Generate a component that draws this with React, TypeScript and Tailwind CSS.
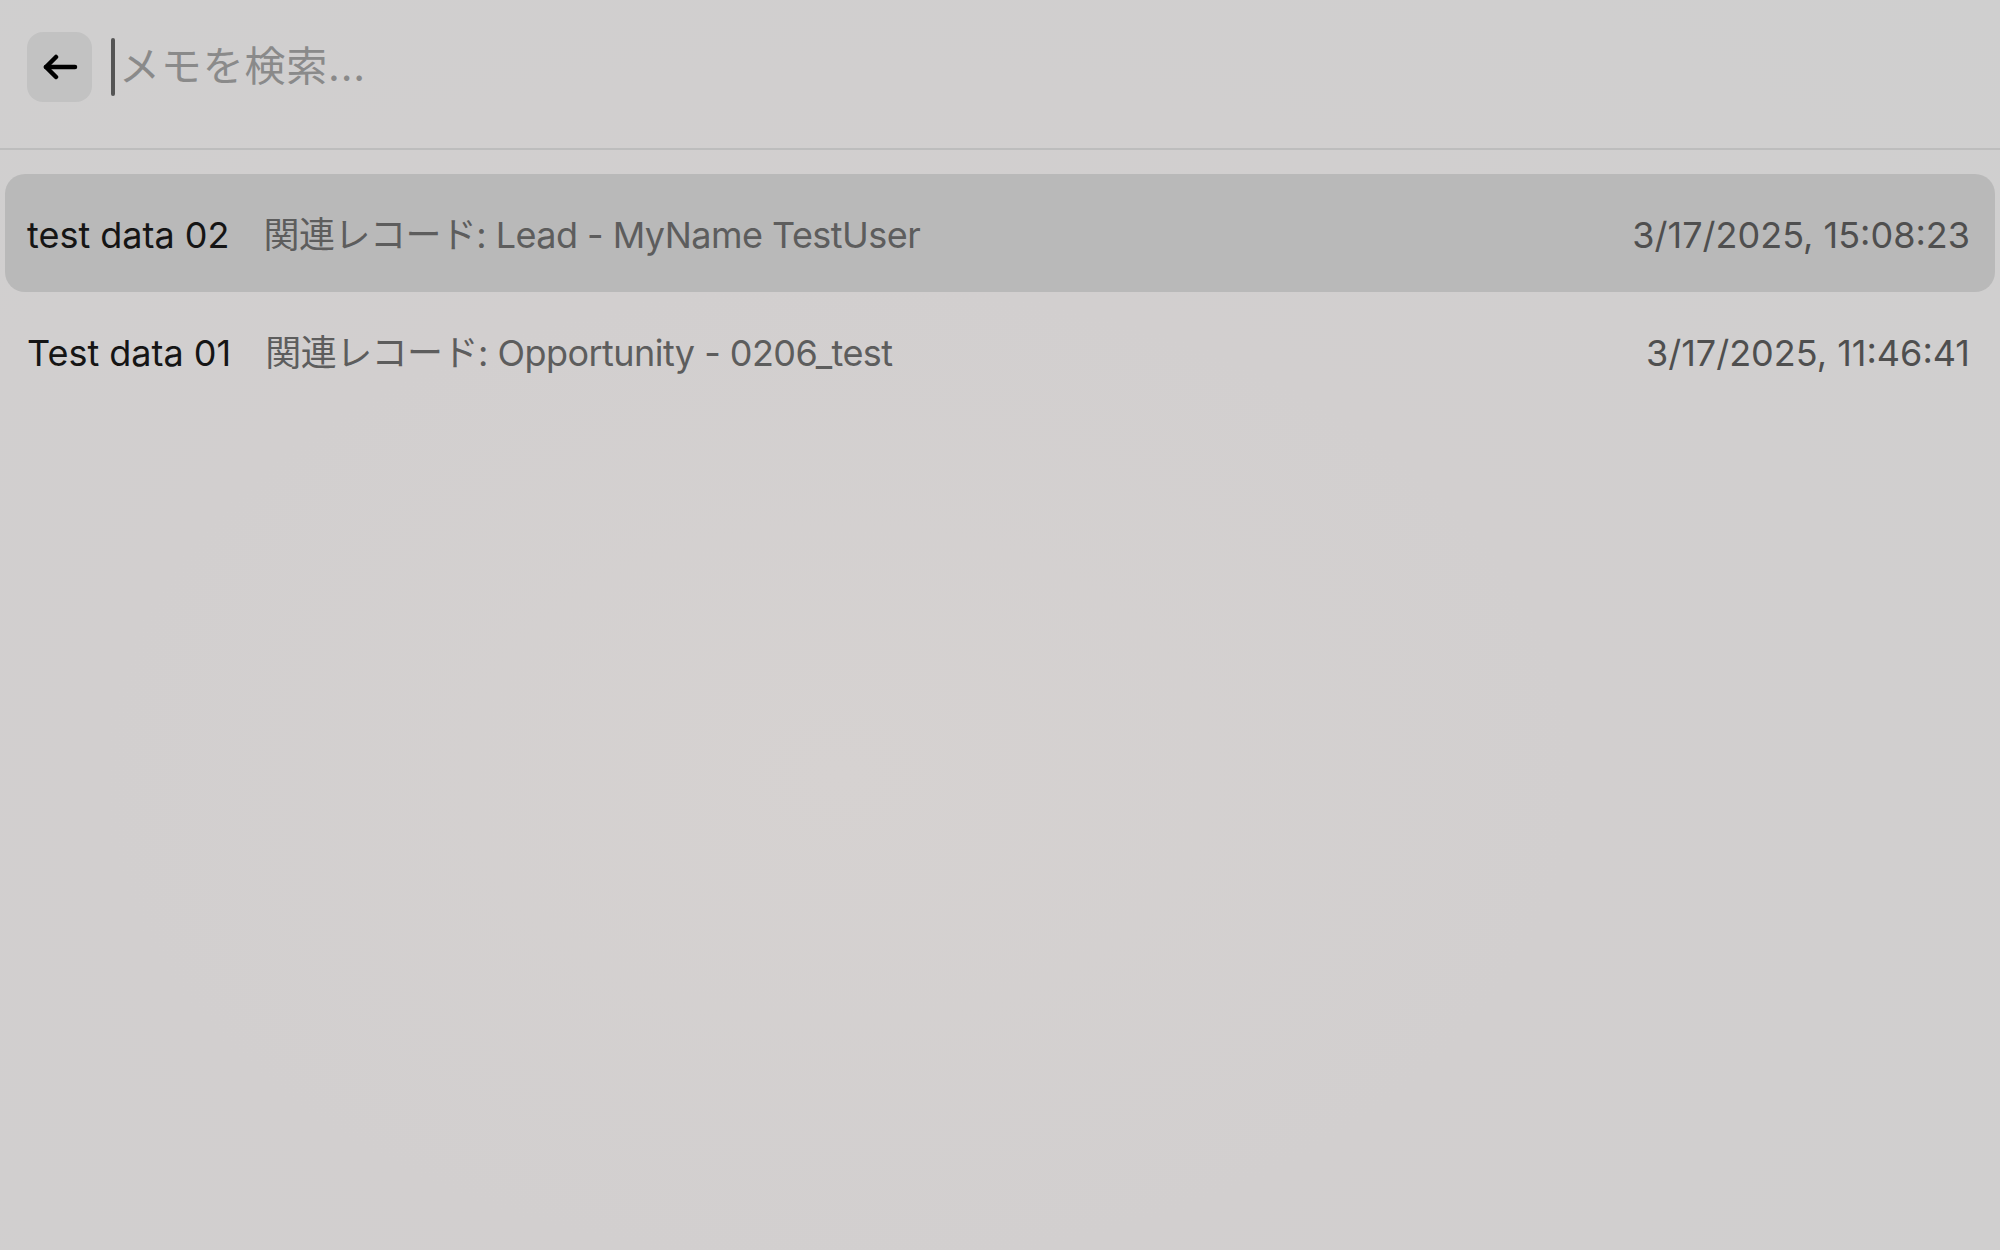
import React from 'react';

type Memo = {
  title: string;
  related: string;
  date: string;
  active?: boolean;
};

const memos: Memo[] = [
  { title: 'test data 02', related: '関連レコード: Lead - MyName TestUser', date: '3/17/2025, 15:08:23', active: true },
  { title: 'Test data 01', related: '関連レコード: Opportunity - 0206_test', date: '3/17/2025, 11:46:41' },
];

const font = { fontFamily: 'Inter, "Noto Sans CJK JP", sans-serif' };

const BackArrow: React.FC = () => (
  <svg width="36" height="26" viewBox="0 0 36 26" fill="none" stroke="black" strokeWidth="4.5" strokeLinecap="round" strokeLinejoin="round">
    <path d="M33 13H4" />
    <path d="M14 3L4 13l10 10" />
  </svg>
);

const App: React.FC = () => {
  return (
    <div
      className="min-h-screen w-full bg-[#cfcfcf] bg-[radial-gradient(ellipse_at_42%_62%,#d6d2d1_0%,#d2cfcf_45%,#cfcfcf_100%)]"
      style={font}
    >
      <header className="h-[150px] px-[27px] pt-[32px] flex items-start gap-[19px] border-b-2 border-[#bdbdbd]">
        <button className="w-[65px] h-[70px] rounded-[16px] bg-[#c2c2c2] flex items-center justify-center shrink-0">
          <BackArrow />
        </button>
        <div className="h-[70px] flex items-center">
          <span className="w-[4px] h-[58px] bg-[#555] rounded-full mr-[4px]"></span>
          <span className="text-[41px] text-[#8a8a8a] tracking-[0.02em]">メモを検索...</span>
        </div>
      </header>

      <ul className="px-[5px] pt-[24px] flex flex-col">
        {memos.map((m) => (
          <li
            key={m.title}
            className={
              'h-[118px] pl-[22px] pr-[25px] rounded-[20px] flex items-center justify-between ' +
              (m.active ? 'bg-[#b9b9b9]' : '')
            }
          >
            <div className="flex items-center gap-[34px] pt-[3px]">
              <span className="text-[36px] text-[#151515]">{m.title}</span>
              <span className="text-[36px] text-[#5d5d5d] tracking-[-0.015em]">{m.related}</span>
            </div>
            <span className="text-[36px] text-[#4f4f4f] pt-[3px]">{m.date}</span>
          </li>
        ))}
      </ul>
    </div>
  );
};

export default App;
